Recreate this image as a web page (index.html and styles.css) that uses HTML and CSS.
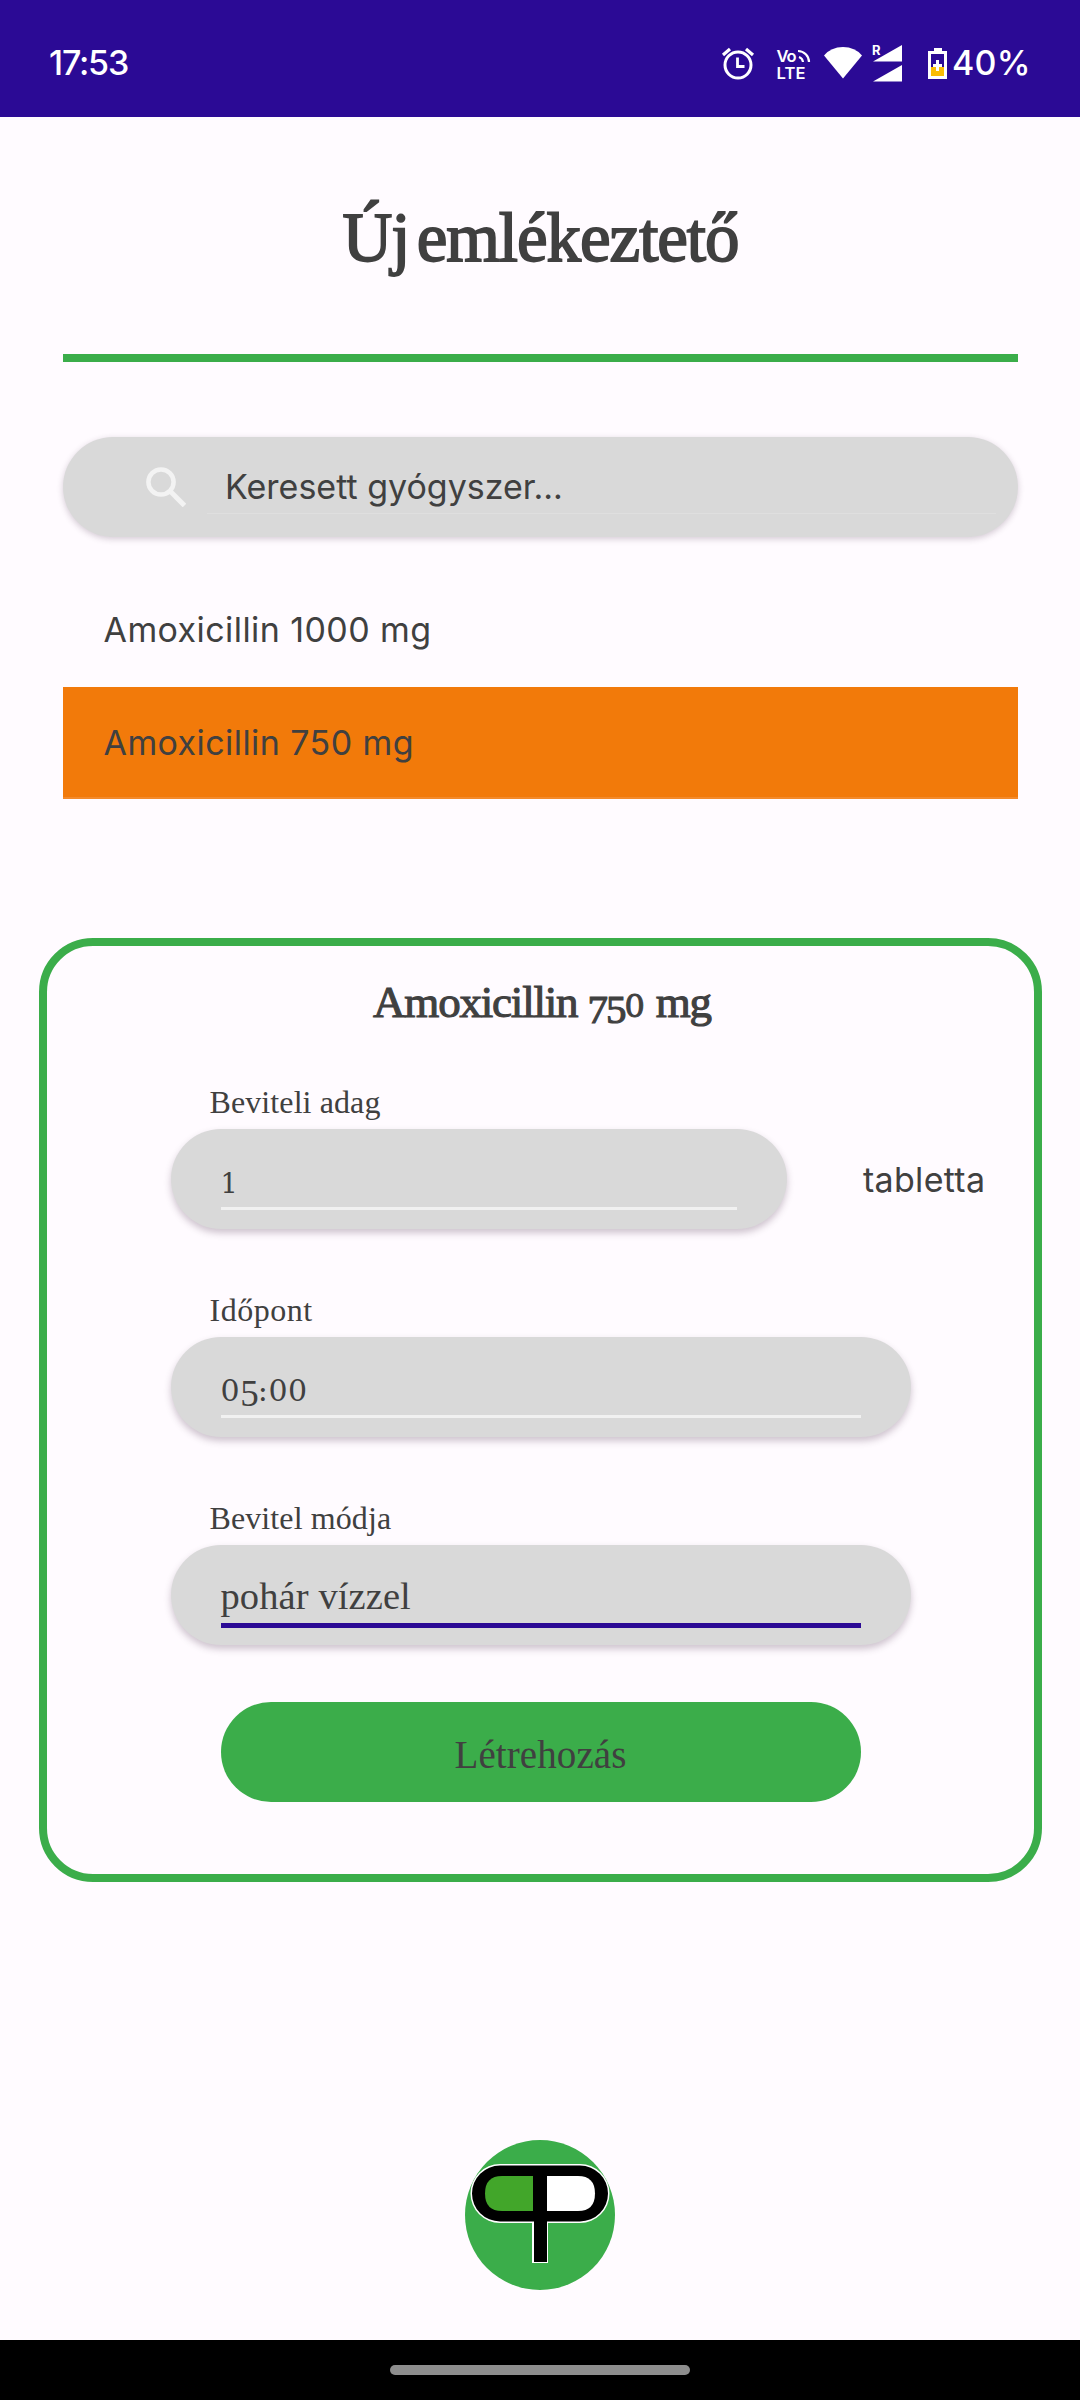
FILE: index.html
```html
<!DOCTYPE html>
<html lang="hu">
<head>
<meta charset="utf-8">
<title>Új emlékeztető</title>
<link rel="stylesheet" href="styles.css">
</head>
<body>
<header class="status">
  <span class="clock">17:53</span>
  <svg class="status-icons" width="228" height="44" viewBox="720 40 228 44" fill="#fff">
    <g fill="none" stroke="#fff" stroke-width="3">
      <circle cx="738" cy="64" r="13"/>
      <path d="M737.5 56.5v9h7" stroke-width="2.8"/>
      <path d="M723 54l7-6M753 54l-7-6" stroke-width="3.2"/>
      <path d="M799 56a6 6 0 0 1 4 5M798 50a11 11 0 0 1 11 11" stroke-width="2.2"/>
    </g>
    <text class="badge" x="776.5" y="60.5">V</text>
    <text class="badge" x="786.500" y="60.5">o</text>
    <text class="badge" x="776.5" y="78" textLength="29">LTE</text>
    <path d="M843 77.5L824 54.5Q831 46 843 46T862 54.5z"/>
    <path d="M873 60.5L902 44v16.500zM873 80.500L902 64v16.500z"/>
    <text class="roaming" x="872" y="54">R</text>
    <path d="M934 47h8v3h5v28h-19v-28h6zM931 53v22h13v-22z" fill-rule="evenodd"/>
    <path d="M931 66h13v9h-13z" fill="#fbbc04"/>
    <path d="M936 59h3v4h3v3h-3v4h-3v-4h-3v-3h3z"/>
  </svg>
  <span class="battery">40%</span>
</header>

<main>
  <h1>Új emlékeztető</h1>
  <div class="search">
    <svg width="40" height="40" viewBox="0 0 40 40" fill="none" stroke="#f3f3f3" stroke-width="4.500"><circle cx="15" cy="15" r="12.600"/><path d="M24 24l14.500 14.500" stroke-width="5"/></svg>
    <span class="query">Keresett gyógyszer...</span>
  </div>
  <ul class="results">
    <li>Amoxicillin 1000 mg</li>
    <li class="selected">Amoxicillin 750 mg</li>
  </ul>

  <section class="card">
    <h2>Amoxicillin <span class="fig-low">75</span><span class="fig">0</span> mg</h2>
    <div class="label">Beviteli adag</div>
    <div class="row">
      <div class="field dose"><div class="value"><span class="one">1</span></div></div>
      <span class="unit">tabletta</span>
    </div>
    <div class="label time-label">Időpont</div>
    <div class="field"><div class="value"><span class="num">0<span class="num-low">5</span>:00</span></div></div>
    <div class="label">Bevitel módja</div>
    <div class="field"><div class="value active">pohár vízzel</div></div>
    <div class="button">Létrehozás</div>
  </section>

  <svg class="logo" width="150" height="150" viewBox="465 2140 150 150">
    <circle cx="540" cy="2215" r="75" fill="#3bad4a"/>
    <path fill="#fff" d="M500 2164h80a29.300 29.300 0 0 1 0 59h-32v40h-16v-40h-32a29.300 29.300 0 0 1 0-59z"/>
    <path fill="#000" d="M500 2165.500h80a28 28 0 0 1 0 56h-33v40.500h-13v-40.500h-34a28 28 0 0 1 0-56z"/>
    <path fill="#42a62a" d="M533 2176v35h-31q-17 0-17-17.500t17-17.500z"/>
    <path fill="#fff" d="M547 2176v35h31q17 0 17-17.500t-17-17.500z"/>
  </svg>
</main>
<footer class="nav"><div class="handle"></div></footer>
</body>
</html>
```

FILE: styles.css
```css
* { box-sizing: border-box; margin: 0; padding: 0; }
body {
  width: 1080px;
  height: 2400px;
  display: flex;
  flex-direction: column;
  background: #fffbff;
  color: #404040;
  font-family: Inter, sans-serif;
  font-size: 34px;
  overflow: hidden;
}
.status {
  height: 117px;
  padding: 8px 51px 0 49px;
  display: flex;
  align-items: center;
  background: #2b0a95;
  color: #fff;
}
.clock { flex: 1; letter-spacing: -1.200px; font-weight: 500; }
.status-icons { display: block; }
.battery { width: 81px; padding-left: 4px; white-space: nowrap; font-weight: 500; letter-spacing: .3px; }
.badge { font: 600 16.500px Inter, sans-serif; }
.roaming { font: 700 13px Inter, sans-serif; }

main {
  flex: 1;
  display: flex;
  flex-direction: column;
  align-items: center;
}
h1, h2, .label, .value, .button { font-family: "Liberation Serif", serif; }
h1 {
  width: 955px;
  height: 245px;
  margin-left: 1px;
  padding-top: 3px;
  border-bottom: 8px solid #3bad4a;
  text-align: center;
  line-height: 237px;
  font-size: 69px;
  font-weight: 400;
  letter-spacing: -1.050px;
  word-spacing: -9px;
  -webkit-text-stroke: 1.8px #404040;
}
.search {
  width: 955px;
  height: 100px;
  margin-top: 75px;
  padding: 0 22px 0 83px;
  display: flex;
  align-items: center;
  border-radius: 50px;
  background: #d9d9d9;
  box-shadow: 0 2px 6px rgba(60, 30, 60, .22);
}
.search svg { margin-right: 21px; }
.query {
  flex: 1;
  height: 54px;
  padding-left: 18.500px;
  line-height: 54px;
  border-bottom: 1px solid #dfdfdf;
}
.results { width: 955px; margin: 37px 0 0 1px; list-style: none; }
.results li { height: 113px; line-height: 111px; padding-left: 40.500px; letter-spacing: .42px; }
.results .selected {
  height: 112px;
  background: #f27a0a;
  border-bottom: 2px solid #f38a2b;
}

.card {
  width: 1003px;
  height: 944px;
  margin: 139px 0 0 1px;
  padding: 0 123.5px;
  border: 8px solid #3bad4a;
  border-radius: 54px;
}
h2 {
  height: 112px;
  margin-bottom: 17px;
  padding-left: 3px;
  text-align: center;
  line-height: 112px;
  font-size: 45px;
  font-weight: 400;
  letter-spacing: -1.2px;
  white-space: nowrap;
  -webkit-text-stroke: 1.100px #404040;
}
.fig, .fig-low { line-height: 1; }
.fig { font-family: "DejaVu Serif", serif; font-size: 32px; letter-spacing: 1px; -webkit-text-stroke: .9px #404040; }
.fig-low { font-size: 41px; vertical-align: -6px; letter-spacing: -2px; }
.label { height: 54px; padding-left: 39px; line-height: 54px; font-size: 32px; letter-spacing: .1px; }
.time-label { letter-spacing: .5px; }
.row { display: flex; width: 830px; }
.field {
  width: 740px;
  height: 100px;
  margin-bottom: 54px;
  padding: 0 50px;
  border-radius: 50px;
  background: #d9d9d9;
  box-shadow: 0 4px 7px rgba(60, 30, 60, .25);
}
.dose { width: 616px; }
.value {
  height: 81px;
  padding: 24px 0 0;
  line-height: 54px;
  font-size: 38.500px;
  letter-spacing: .1px;
  border-bottom: 3px solid #f1f1f1;
}
.active { height: 83px; border-bottom: 5px solid #2b0a95; }
.num, .one { font-family: "DejaVu Serif", serif; line-height: 1; }
.num { font-size: 30px; letter-spacing: .6px; }
.one { font-size: 27px; }
.num-low { font-family: "Liberation Serif", serif; font-size: 37px; line-height: 1; vertical-align: -5px; letter-spacing: -1px; }
.unit { margin-left: 76.500px; line-height: 102px; letter-spacing: .3px; }
.button {
  width: 640px;
  height: 100px;
  margin: 57px auto 0;
  padding-top: 5px;
  border-radius: 50px;
  background: #3bad4a;
  text-align: center;
  line-height: 95px;
  font-size: 39px;
  letter-spacing: .1px;
}
.logo { margin-top: 258px; }
.nav {
  height: 60px;
  padding-top: 25px;
  background: #000;
}
.handle { width: 300px; height: 10px; margin: 0 auto; border-radius: 5px; background: #8e8e8e; }
```
